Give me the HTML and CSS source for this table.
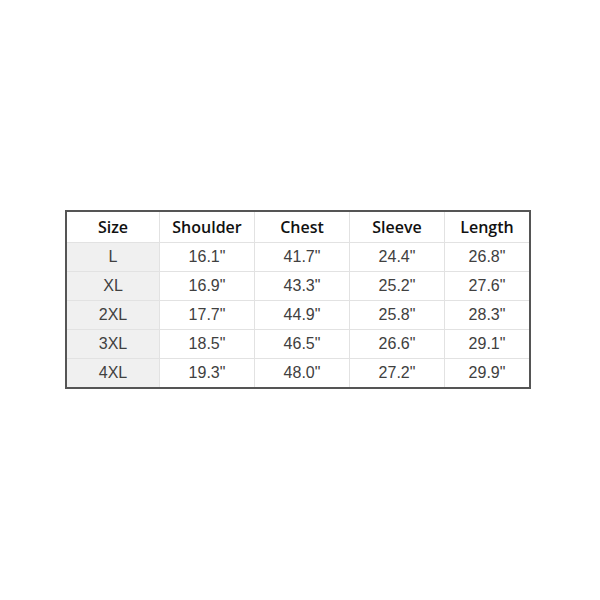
FILE: index.html
```html
<!DOCTYPE html>
<html>
<head>
<meta charset="utf-8">
<link rel="stylesheet" href="styles.css">
</head>
<body>
<table class="size-table">
  <thead>
    <tr><th>Size</th><th>Shoulder</th><th>Chest</th><th>Sleeve</th><th>Length</th></tr>
  </thead>
  <tbody>
    <tr><td class="size">L</td><td>16.1"</td><td>41.7"</td><td>24.4"</td><td>26.8"</td></tr>
    <tr><td class="size">XL</td><td>16.9"</td><td>43.3"</td><td>25.2"</td><td>27.6"</td></tr>
    <tr><td class="size">2XL</td><td>17.7"</td><td>44.9"</td><td>25.8"</td><td>28.3"</td></tr>
    <tr><td class="size">3XL</td><td>18.5"</td><td>46.5"</td><td>26.6"</td><td>29.1"</td></tr>
    <tr><td class="size">4XL</td><td>19.3"</td><td>48.0"</td><td>27.2"</td><td>29.9"</td></tr>
  </tbody>
</table>
</body>
</html>
```
FILE: styles.css
```css
html, body {
  margin: 0;
  background: #fff;
}
body {
  padding: 210px 0 0 65px;
}
.size-table {
  border-collapse: collapse;
  border: 2px solid #555;
  table-layout: fixed;
  width: 466px;
  font-family: "Liberation Sans", Arial, sans-serif;
}
.size-table th,
.size-table td {
  border: 1px solid #e2e2e2;
  text-align: center;
  padding: 0;
}
.size-table th {
  height: 30px;
  font-family: "Open Sans", "Noto Sans", sans-serif;
  font-weight: 600;
  font-size: 16px;
  color: #111;
}
.size-table td {
  height: 28px;
  font-size: 16px;
  color: #404040;
}
.size-table td.size {
  background: #f0f0f0;
}
.size-table th:nth-child(1) { width: 92px; }
.size-table th:nth-child(2),
.size-table th:nth-child(3),
.size-table th:nth-child(4) { width: 94px; }
```
